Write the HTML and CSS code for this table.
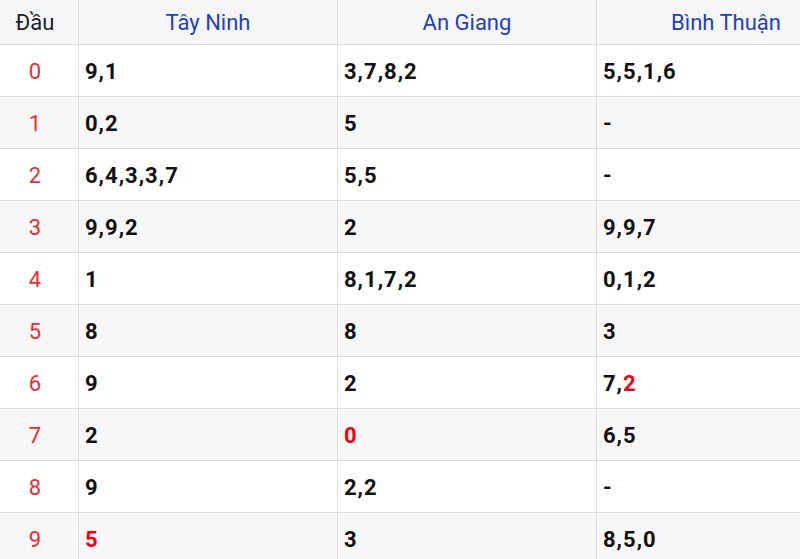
FILE: index.html
```html
<!DOCTYPE html>
<html lang="vi">
<head>
<meta charset="utf-8">
<title>Loto</title>
<link rel="stylesheet" href="styles.css">
</head>
<body>
<table class="loto">
  <thead>
    <tr><th class="dau">Đầu</th><th class="prov">Tây Ninh</th><th class="prov">An Giang</th><th class="prov">Bình Thuận</th></tr>
  </thead>
  <tbody>
    <tr><td class="dau">0</td><td>9,1</td><td>3,7,8,2</td><td>5,5,1,6</td></tr>
    <tr><td class="dau">1</td><td>0,2</td><td>5</td><td>-</td></tr>
    <tr><td class="dau">2</td><td>6,4,3,3,7</td><td>5,5</td><td>-</td></tr>
    <tr><td class="dau">3</td><td>9,9,2</td><td>2</td><td>9,9,7</td></tr>
    <tr><td class="dau">4</td><td>1</td><td>8,1,7,2</td><td>0,1,2</td></tr>
    <tr><td class="dau">5</td><td>8</td><td>8</td><td>3</td></tr>
    <tr><td class="dau">6</td><td>9</td><td>2</td><td>7,<span class="hot">2</span></td></tr>
    <tr><td class="dau">7</td><td>2</td><td><span class="hot">0</span></td><td>6,5</td></tr>
    <tr><td class="dau">8</td><td>9</td><td>2,2</td><td>-</td></tr>
    <tr><td class="dau">9</td><td><span class="hot">5</span></td><td>3</td><td>8,5,0</td></tr>
  </tbody>
</table>
</body>
</html>
```
FILE: styles.css
```css
html, body {
  margin: 0;
  padding: 0;
  background: #fff;
  overflow: hidden;
}
body {
  font-family: Roboto, "Liberation Sans", sans-serif;
  width: 800px;
  height: 559px;
}
.loto {
  border-collapse: collapse;
  width: 857px;
  table-layout: fixed;
  margin-top: -1px;
  margin-left: -1px;
}
.loto th, .loto td {
  border: 1px solid #dedede;
  font-size: 22px;
  padding: 0 6px;
}
.loto th {
  height: 44px;
  background: #f6f6f6;
  font-weight: 400;
  text-align: center;
  color: #1f3fbf;
}
.loto th.dau {
  width: 66px;
  color: #222;
  padding: 0 10px 0 2px;
}
.loto td {
  height: 49px;
  font-weight: 700;
  color: #111;
  text-align: left;
  letter-spacing: 1px;
  padding-top: 2px;
}
.loto td.dau {
  font-weight: 400;
  letter-spacing: 0;
  color: #ee2a35;
  text-align: center;
  padding: 2px 10px 0 2px;
}
.loto tbody tr:nth-child(even) td {
  background: #f7f7f7;
}
.hot {
  color: #f00010;
}
```
